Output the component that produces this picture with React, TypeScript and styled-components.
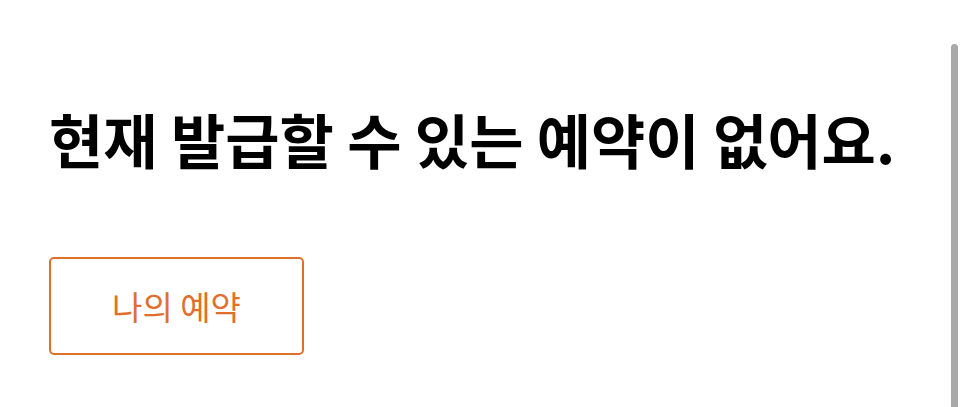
import React from 'react'
import styled, { createGlobalStyle } from 'styled-components'

const GlobalStyle = createGlobalStyle`
  html, body {
    margin: 0;
    padding: 0;
    background: #ffffff;
    font-family: "Noto Sans CJK KR", "Noto Sans", sans-serif;
  }
`

const Page = styled.div`
  position: relative;
  height: 407px;
  overflow: hidden;
  padding: 103px 0 0 49px;
  box-sizing: border-box;
`

const Title = styled.h1`
  margin: 0;
  font-size: 59px;
  font-weight: 700;
  line-height: 71px;
  color: #000000;
  letter-spacing: 0;
  white-space: nowrap;
`

const OutlineButton = styled.button`
  display: block;
  margin-top: 83px;
  width: 255px;
  height: 98px;
  border: 2px solid #e06f2e;
  border-radius: 5px;
  background: #ffffff;
  color: #e06f2e;
  font-family: inherit;
  font-size: 33px;
  font-weight: 400;
  cursor: pointer;
`

const ScrollThumb = styled.div`
  position: absolute;
  top: 44px;
  right: 8px;
  width: 7px;
  bottom: 0;
  border-radius: 4px 4px 0 0;
  background: #a9a9a9;
`

export default function App() {
  return (
    <>
      <GlobalStyle />
      <Page>
        <Title>현재 발급할 수 있는 예약이 없어요.</Title>
        <OutlineButton>나의 예약</OutlineButton>
        <ScrollThumb />
      </Page>
    </>
  )
}
